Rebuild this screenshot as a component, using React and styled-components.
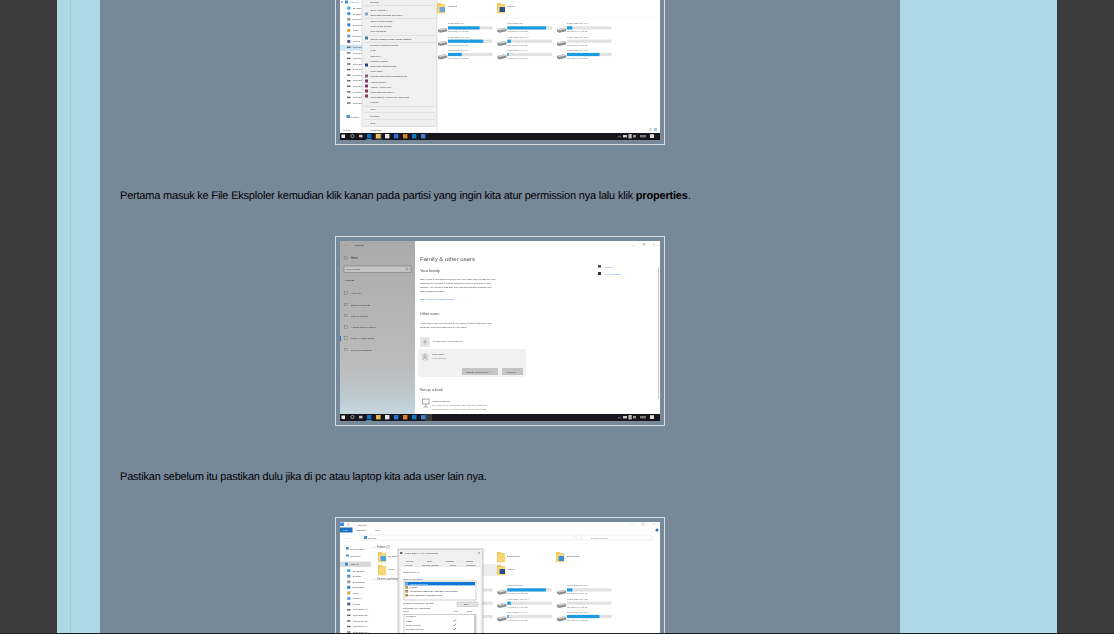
import React from "react";
import styled, { createGlobalStyle } from "styled-components";

const Global = createGlobalStyle`
  html, body { margin: 0; padding: 0; height: 100%; overflow: hidden; background: #3c3c3c; }
`;
const Viewport = styled.div`
  height: 633px; overflow: hidden; border-bottom: 1px solid #1c1f22;
  background: #3c3c3c; display: flex; justify-content: flex-start; padding-left: 57px;
`;
const Outer = styled.div`
  position: relative; width: 957px; height: 100%; background: #add8e6;
  display: flex; justify-content: flex-start; padding-left: 43px;
`;
const Rule = styled.div`
  position: absolute; left: 13px; top: 0; bottom: 0; width: 0;
  border-left: 1px dotted #b4b4b4;
`;
const Post = styled.article`
  width: 800px; height: 100%; background: #778899; overflow: hidden;
  display: flex; flex-direction: column; align-items: center;
`;
const Frame = styled.div`
  flex: none; width: 320px; height: 180px; padding: 4px;
  border: 1px solid #d9dee2; line-height: 0;
  margin-top: ${p => p.$top || 0}px;
`;
const Para = styled.p`
  align-self: stretch; margin: 43px 20px 31px;
  font: 11px/17px "Liberation Sans", sans-serif; color: #000;
  letter-spacing: -0.2px;
  text-rendering: geometricPrecision;
  height: 17px; white-space: nowrap;
`;
const Strong = styled.b`font-weight: 700;`;
const Shot = styled.svg`display: block; width: 320px; height: 180px; background: #fff; overflow: hidden;`;
const T = styled.text`
  font-family: "Liberation Sans", sans-serif;
  font-size: ${p => p.$s || 2.7}px;
  fill: ${p => p.$c || "#444"};
`;

const Taskbar = ({ active }) => (
  <g>
    <rect x="0" y="173" width="320" height="7" fill="#17191b" />
    <rect x="1.5" y="174.5" width="3.5" height="3.5" fill="#e8e8e8" />
    <circle cx="12.5" cy="176" r="1.6" fill="none" stroke="#ddd" strokeWidth=".6" />
    <rect x="19" y="174.8" width="3.5" height="2.6" fill="#bbb" />
    <rect x="27" y="174" width="4.4" height="4.4" fill="#0a6fc4" />
    <rect x="36" y="174" width="4.6" height="4.4" fill="#e8b94c" />
    <rect x="45" y="174" width="4.4" height="4.4" fill="#e4e4e4" />
    <rect x="54" y="174" width="4.4" height="4.4" fill="#2b6fd6" />
    <rect x="63" y="174" width="4.4" height="4.4" fill="#e0802c" />
    <rect x="72" y="174" width="4.4" height="4.4" fill="#0a78c8" />
    <rect x="81" y="174" width="4.4" height="4.4" fill="#3b7fd6" />
    <rect x="26" y="179" width="6" height=".7" fill="#5ab0ea" />
    <rect x={active} y="173" width="7" height="7" fill="#ffffff" opacity=".14" />
    <path d="M278 177.5l1.4-1.6 1.4 1.6" fill="none" stroke="#ddd" strokeWidth=".5" />
    <rect x="283" y="175" width="4" height="2.4" fill="#ccc" />
    <rect x="288.5" y="174" width="3.2" height="4.4" fill="#bbb" />
    <rect x="293" y="175" width="3" height="2.4" fill="#999" />
    <rect x="300" y="175" width="6" height="2.4" fill="#777" />
    <rect x="310" y="174.2" width="4" height="3.8" fill="#ddd" />
  </g>
);

const driveNames = [
  ["Local Disk (C:)", "Local Disk (D:)", "Local Disk (E:) (K:)"],
  ["Local Disk (N:) (M:)", "Local Disk (O:)  (P:)", "Local Disk (Q:) (S:)"],
  ["Local Disk (T:) (U:)", "Local Disk (V:)  (Y:)", "Local Disk (Z:) (Z:)"],
];
const usage = [[.71, .87, .12], [.79, .08, 0], [.31, .03, .73]];
const Drives = () => (
  <g>
    {driveNames.map((row, r) => row.map((name, c) => {
      const x = [108, 167.3, 227][c];
      const y = 64.3 + r * 13.3;
      return (
        <g key={name}>
          <path d={`M${x - 10} ${y + 5}l7-1.6 2.2 1.3v2.2l-7 1.6-2.2-1.2z`} fill="#8b8f93" />
          <path d={`M${x - 10} ${y + 5}l7-1.6 2.2 1.3-7 1.5z`} fill="#d4d6d8" />
          <T x={x} y={y} $s={2.5} $c="#666">{name}</T>
          <rect x={x} y={y + 2} width="44.5" height="3.2" fill="#e2e2e2" />
          <rect x={x} y={y + 2} width={44.5 * usage[r][c]} height="3.2" fill="#1c9be0" />
          <T x={x} y={y + 8} $s={2} $c="#777">182 GB free of 465 GB</T>
        </g>
      );
    }))}
  </g>
);

const Folder = ({ x, y, badge }) => (
  <g>
    <path d={`M${x} ${y}h3.5l1 1.2h3.5v9h-8z`} fill="#eec65f" />
    <rect x={x + .8} y={y + 2} width="7.4" height="7.8" fill="#f7d778" />
    {badge && <rect x={x + 2.6} y={y + 4} width="5.4" height="5" fill={badge} />}
  </g>
);

const sideItems = [
  ["3D Objects", "#3aa8e0"], ["Desktop", "#3a8fd8"], ["Documents", "#999"], ["Downloads", "#2c7fd0"],
  ["Music", "#d9a13a"], ["Pictures", "#59a0d6"], ["Videos", "#555e88"],
];
const Sidebar = ({ start, disks, highlight }) => (
  <g>
    {highlight !== undefined && <rect x="0" y={highlight} width="23" height="5.6" fill="#cde4f5" />}
    {sideItems.map(([n, c], i) => (
      <g key={n}>
        <rect x="7.3" y={start + i * 5.57 - 2.4} width="3" height="3" fill={c} />
        <T x="12.7" y={start + i * 5.57} $s={2.4}>{n}</T>
      </g>
    ))}
    {disks.map((n, i) => (
      <g key={i}>
        <rect x="7" y={start + (i + 7) * 5.57 - 1.4} width="3.6" height="1.4" fill="#666" />
        <T x="12.7" y={start + (i + 7) * 5.57} $s={2.4}>{n}</T>
      </g>
    ))}
  </g>
);

const menu = [
  ["Expand", 43], ["Open AutoPlay...", 50.5], ["Scan with Microsoft Defender...", 55.5], ["Open in new window", 62], ["Pin to Quick access", 67],
  ["Give access to", 72.2], ["Create a backup image of this partition", 79.5], ["Restore previous versions", 86], ["7-Zip", 91], ["CRC SHA", 96.5],
  ["Include in library", 102], ["Scan with Malwarebytes", 107], ["Pin to Start", 112], ["Uninstall with Revo Uninstaller Pro", 117], ["Add to archive...", 122.5],
  ["Add to \"Archive.rar\"", 127.5], ["Compress and email...", 133], ["Compress to \"Archive.rar\" and email", 138], ["Format...", 143], ["Copy", 149.5],
  ["Rename", 156.5], ["New", 163.5], ["Properties", 170.5],
];
const ContextMenu = () => (
  <g>
    <rect x="22" y="36" width="75" height="137" fill="#f0f0f0" stroke="#bbb" strokeWidth=".4" />
    {[45, 58, 75.5, 82, 146, 152, 159.5, 166].map(y => <rect key={y} x="24" y={y} width="71" height=".4" fill="#c8c8c8" />)}
    <rect x="22.2" y="167" width="74.6" height="5.8" fill="#fbfbfb" />
    {menu.map(([n, y]) => <T key={n} x="30.5" y={y} $s={2.4} $c="#333">{n}</T>)}
    {[54, 78, 105, 116, 121, 126, 131, 136].map((y, i) => <rect key={y} x="25" y={y - 1.5} width="3" height="3" fill={["#7aa7d6", "#3d7ea8", "#21418a", "#8a5a80", "#7a3b6a", "#7a3b6a", "#8a3b5a", "#7a3b6a"][i]} />)}
  </g>
);

const FirstShot = () => (
  <Shot viewBox="0 0 320 180">
    <defs><filter id="soft1"><feGaussianBlur stdDeviation=".3" /></filter></defs>
    <g filter="url(#soft1)">
      <circle cx="2" cy="42" r=".8" fill="#555" />
      <rect x="5" y="40.5" width="3" height="3" fill="#3a8fd8" />
      <T x="10" y="43" $s={2.4} $c="#2f7fd0">This PC</T>
      <Sidebar start={49} highlight={85} disks={Array(11).fill("Local Disk")} />
      <T x="10.6" y="157.6" $s={2.4}>Network</T>
      <rect x="6.5" y="155" width="3.4" height="3" fill="#4a90d8" />
      <T x="3" y="171" $s={2}>19 items</T>
      <Folder x={97} y={43} badge="#6aa7d8" />
      <T x="108" y="47" $s={2.5}>Pictures</T>
      <Folder x={157} y={43} badge="#2a4f8a" />
      <T x="167" y="47" $s={2.5}>Videos</T>
      <rect x="96" y="57" width="224" height=".3" fill="#eee" />
      <Drives />
      <ContextMenu />
      <rect x="309" y="168" width="3" height="3" fill="#ddd" />
      <rect x="314" y="168" width="3" height="3" fill="#9cc4e4" />
      <Taskbar active={35} />
    </g>
  </Shot>
);

const settingsNav = [["Your info", 53], ["Email & accounts", 64.5], ["Sign-in options", 75.5], ["Access work or school", 87], ["Family & other users", 98], ["Sync your settings", 109.5]];
const SecondShot = () => (
  <Shot viewBox="0 0 320 180">
    <defs>
      <linearGradient id="pane" x1="0" x2="0" y1="0" y2="1">
        <stop offset="0" stopColor="#a9aaa9" />
        <stop offset=".72" stopColor="#bcbcbc" />
        <stop offset=".9" stopColor="#bccad0" />
        <stop offset="1" stopColor="#c6d6df" />
      </linearGradient>
      <filter id="soft2"><feGaussianBlur stdDeviation=".3" /></filter>
    </defs>
    <g filter="url(#soft2)">
      <rect x="0" y="0" width="75" height="173" fill="url(#pane)" />
      <T x="5" y="4.8" $s={2.6}>←</T>
      <T x="14.5" y="4.8" $s={2.5} $c="#333">Settings</T>
      <circle cx="5.5" cy="17" r="1.5" fill="none" stroke="#555" strokeWidth=".4" />
      <T x="11" y="18" $s={2.6} $c="#333">Home</T>
      <rect x="4" y="25" width="67" height="6.5" fill="#c5c5c5" stroke="#6c6c6c" strokeWidth=".5" />
      <T x="6" y="29" $s={2.4} $c="#444">Find a setting</T>
      <circle cx="67" cy="28" r="1.1" fill="none" stroke="#555" strokeWidth=".35" />
      <T x="4" y="40" $s={2.5} $c="#222">Accounts</T>
      {settingsNav.map(([n, y]) => (
        <g key={n}>
          <rect x="4.5" y={y - 2.3} width="3" height="2.6" fill="none" stroke="#666" strokeWidth=".35" />
          <T x="11" y={y} $s={2.5} $c="#333">{n}</T>
        </g>
      ))}
      <rect x="0" y="95" width="1" height="5" fill="#0a78d7" />

      <T x="80" y="20" $s={6} $c="#555">Family &amp; other users</T>
      <T x="80" y="31" $s={4} $c="#444">Your family</T>
      <T x="80" y="39" $s={2.4}>Sign in with a Microsoft account to see your family here or add any new</T>
      <T x="80" y="43" $s={2.4}>members to your family. Family members get their own sign-in and</T>
      <T x="80" y="47" $s={2.4}>desktop. You can help kids stay safe with appropriate websites, time</T>
      <T x="80" y="51" $s={2.4}>limits, apps and games.</T>
      <T x="80" y="59" $s={2.4} $c="#2f7fd0">Sign in with a Microsoft account</T>
      <T x="80" y="74" $s={3.7} $c="#444">Other users</T>
      <T x="80" y="83" $s={2.4}>Allow people who are not part of your family to sign in with their own</T>
      <T x="80" y="87" $s={2.4}>accounts. This won't add them to your family.</T>
      <rect x="80" y="96" width="10" height="10" fill="#e4e4e4" />
      <path d="M85 98.5v5M82.5 101h5" stroke="#666" strokeWidth=".4" />
      <T x="92" y="100.5" $s={2.4} $c="#444">Add someone else to this PC</T>
      <rect x="78" y="108" width="108" height="28" fill="#f1f1f1" />
      <circle cx="85" cy="116" r="4" fill="#e2e2e2" />
      <circle cx="85" cy="115" r="1.3" fill="none" stroke="#666" strokeWidth=".4" />
      <path d="M82.8 118.8c.3-2.8 4.1-2.8 4.4 0" fill="none" stroke="#666" strokeWidth=".4" />
      <T x="92" y="114" $s={2.4} $c="#444">Mode Tamu</T>
      <T x="92" y="118" $s={2.2} $c="#777">Local account</T>
      <rect x="122" y="127" width="36" height="7" fill="#c4c4c4" />
      <T x="126" y="131.5" $s={2.4} $c="#333">Change account type</T>
      <rect x="162" y="127" width="21" height="7" fill="#c4c4c4" />
      <T x="167" y="131.5" $s={2.4} $c="#333">Remove</T>
      <T x="80" y="150" $s={3.7} $c="#444">Set up a kiosk</T>
      <rect x="82.5" y="158" width="6.5" height="5" fill="none" stroke="#555" strokeWidth=".5" />
      <path d="M85.7 163v2.5M83.5 166h4.5" stroke="#555" strokeWidth=".5" />
      <T x="92" y="161" $s={2.4} $c="#444">Assigned access</T>
      <T x="92" y="165" $s={2.2} $c="#777">Set up this device as a kiosk—this could be a digital sign,</T>
      <T x="92" y="169" $s={2.2} $c="#777">interactive display, or public browser among other things</T>
      <rect x="258" y="24" width="3" height="2.6" fill="#555" />
      <T x="265" y="27" $s={2.4} $c="#4b8fd6">Get help</T>
      <rect x="258" y="31" width="3" height="3" fill="#333" />
      <T x="265" y="34" $s={2.4} $c="#4b8fd6">Give feedback</T>
      <rect x="292" y="4" width="2" height=".3" fill="#888" />
      <rect x="303" y="2.6" width="2" height="2" fill="none" stroke="#777" strokeWidth=".3" />
      <path d="M313.2 2.6l2 2M315.2 2.6l-2 2" stroke="#777" strokeWidth=".3" />
      <rect x="318" y="26" width="1" height="132" fill="#c9c9c9" />
      <Taskbar active={85} />
    </g>
  </Shot>
);

const ThirdShot = () => (
  <Shot viewBox="0 0 320 180">
    <defs><filter id="soft3"><feGaussianBlur stdDeviation=".3" /></filter></defs>
    <g filter="url(#soft3)">
      <rect x="0" y="0.5" width="4" height="3.5" fill="#3a8fd8" />
      <rect x="7" y="1" width="2.5" height="3" fill="#ddd" />
      <T x="18" y="4" $s={2.4}>This PC</T>
      <rect x="0" y="5.5" width="12.5" height="5" fill="#1a6fc2" />
      <T x="3.5" y="9" $s={2.4} $c="#fff">File</T>
      <T x="16" y="9" $s={2.4}>Computer</T>
      <T x="35" y="9" $s={2.4}>View</T>
      <rect x="291" y="2.4" width="2" height=".3" fill="#888" />
      <rect x="302" y="1.4" width="2" height="2" fill="none" stroke="#888" strokeWidth=".3" />
      <path d="M313 1.4l2 2M315 1.4l-2 2" stroke="#888" strokeWidth=".3" />
      <circle cx="317" cy="8" r="1.5" fill="#1a6fc2" />
      <T x="3" y="17" $s={2.6} $c="#888">←  →  ⌄  ↑</T>
      <rect x="22" y="13" width="212" height="5" fill="#fff" stroke="#d8d8d8" strokeWidth=".4" />
      <rect x="24" y="14" width="3" height="3" fill="#3a8fd8" />
      <T x="28" y="17" $s={2.4}>This PC</T>
      <rect x="236" y="13" width="4" height="5" fill="#fff" stroke="#d8d8d8" strokeWidth=".4" />
      <rect x="242" y="13" width="70" height="5" fill="#fff" stroke="#d8d8d8" strokeWidth=".4" />
      <T x="251" y="17" $s={2.4} $c="#888">Search This PC</T>
      <rect x="6" y="25" width="2.6" height="2.6" fill="#3a8fd8" />
      <T x="10.5" y="28" $s={2.4}>Quick access</T>
      <rect x="6" y="32.5" width="2.8" height="2" fill="#3a8fd8" />
      <T x="10.5" y="35" $s={2.4}>OneDrive</T>
      <rect x="0" y="39.5" width="31" height="5.4" fill="#d9d9d9" />
      <rect x="5" y="40.6" width="3" height="3" fill="#3a8fd8" />
      <T x="10.5" y="43.2" $s={2.4} $c="#333">This PC</T>
      <Sidebar start={49.5} disks={["Local Disk (A:)", "Local Disk (D:)", "Local Disk (E:)", "Local Disk (F:)", "Local Disk (G:)"]} />
      <T x="33" y="26" $s={2.7} $c="#555">⌄ Folders (7)</T>
      <Folder x={38} y={30} badge="#49a6e4" />
      <T x="48" y="35" $s={2.5}>3D Objects</T>
      <Folder x={157} y={30} />
      <T x="167" y="35" $s={2.5}>Documents</T>
      <Folder x={216} y={30} badge="#3a8fd8" />
      <T x="227" y="35" $s={2.5}>Downloads</T>
      <Folder x={38} y={43} />
      <T x="48" y="48" $s={2.5}>Music</T>
      <rect x="143" y="42" width="14" height="12" fill="#ededed" />
      <Folder x={157} y={43} badge="#2a4f8a" />
      <T x="167" y="48" $s={2.5}>Videos</T>
      <T x="33" y="58" $s={2.7} $c="#555">⌄ Devices and drives (12)</T>
      <Drives />
      <rect x="58" y="27" width="85" height="140" fill="#f0f0f0" stroke="#8a8a8a" strokeWidth=".5" />
      <rect x="60" y="30" width="2.4" height="2" fill="#666" />
      <T x="65" y="32" $s={2.5} $c="#333">Local Disk (A:) (X:) Properties</T>
      <path d="M138 30l2 2M140 30l-2 2" stroke="#444" strokeWidth=".3" />
      <rect x="60" y="44.6" width="81" height="120" fill="#fff" stroke="#ccc" strokeWidth=".3" />
      {[["General", 66, 39.6], ["Tools", 87, 39.6], ["Hardware", 105, 39.6], ["Sharing", 126, 39.6], ["Security", 65, 43.8], ["Previous Versions", 82, 43.8], ["Quota", 110, 43.8], ["Customize", 126, 43.8]].map(([n, x, y]) => (
        <T key={n} x={x} y={y} $s={2.1} $c="#333">{n}</T>
      ))}
      <T x="63" y="50.5" $s={2.2} $c="#333">Object name:   X:\</T>
      <T x="63" y="57.7" $s={2.1} $c="#333">Group or user names:</T>
      <rect x="64" y="59" width="72" height="19" fill="#fff" stroke="#777" strokeWidth=".35" />
      <rect x="65" y="60" width="70" height="3.4" fill="#0a78d7" />
      <T x="69" y="62.6" $s={2.1} $c="#fff">Authenticated Users</T>
      <T x="69" y="66" $s={2.1} $c="#333">SYSTEM</T>
      <T x="69" y="70" $s={2.1} $c="#333">Administrators (DESKTOP-SO5PETL\Administrators)</T>
      <T x="69" y="74" $s={2.1} $c="#333">Users (DESKTOP-SO5PETL\Users)</T>
      {[60.3, 64, 68, 72].map((y, i) => <rect key={y} x="65.3" y={y} width="2.6" height="2.6" fill={i ? "#a88f3a" : "#8fb0d0"} />)}
      <T x="63" y="82.4" $s={2.1} $c="#333">To change permissions, click Edit.</T>
      <rect x="117" y="80" width="21" height="4.6" fill="#e1e1e1" stroke="#999" strokeWidth=".3" />
      <T x="124" y="83" $s={2.1} $c="#333">Edit...</T>
      <T x="63" y="87.4" $s={2.1} $c="#333">Permissions for Authenticated</T>
      <T x="63" y="90.3" $s={2.1} $c="#333">Users</T>
      <T x="113" y="90.3" $s={2.1} $c="#333">Allow</T>
      <T x="127" y="90.3" $s={2.1} $c="#333">Deny</T>
      <rect x="64" y="92.3" width="72" height="40" fill="#fff" stroke="#777" strokeWidth=".35" />
      <rect x="134" y="92.5" width="2" height="39.6" fill="#ccc" />
      {["Full control", "Modify", "Read & execute", "List folder contents"].map((n, i) => (
        <g key={n}>
          <T x="66" y={95.2 + i * 4.3} $s={2.1} $c="#333">{n}</T>
          {i > 0 && <path d={`M113.5 ${94.2 + i * 4.3}l.8.9 1.5-2`} fill="none" stroke="#222" strokeWidth=".5" />}
        </g>
      ))}
    </g>
  </Shot>
);

export default function App() {
  return (
    <>
      <Global />
      <Viewport>
        <Outer>
          <Rule />
          <Post>
            <Frame $top={-45}><FirstShot /></Frame>
            <Para>Pertama masuk ke File Eksploler kemudian klik kanan pada partisi yang ingin kita atur permission nya lalu klik <Strong>properties</Strong>.</Para>
            <Frame><SecondShot /></Frame>
            <Para>Pastikan sebelum itu pastikan dulu jika di pc atau laptop kita ada user lain nya.</Para>
            <Frame><ThirdShot /></Frame>
          </Post>
        </Outer>
      </Viewport>
    </>
  );
}
